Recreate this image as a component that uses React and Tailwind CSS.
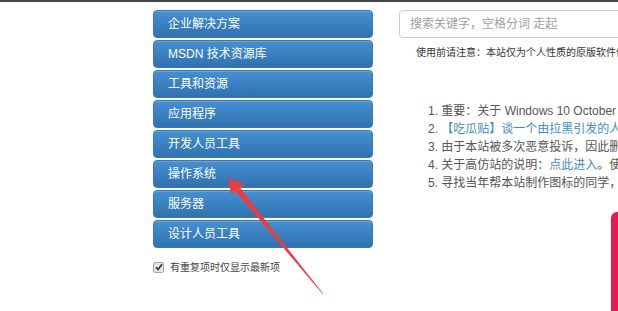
import React from "react";

const items = ["企业解决方案", "MSDN 技术资源库", "工具和资源", "应用程序", "开发人员工具", "操作系统", "服务器", "设计人员工具"];

export default function App() {
  const font = { fontFamily: '"Liberation Sans", "Noto Sans CJK SC", sans-serif' };
  return (
    <div className="relative w-[618px] h-[311px] overflow-hidden bg-white border-t-2 border-[#454545]" style={font}>
      <div className="flex pt-[8px] pl-[153px]">
        <div className="w-[220px] shrink-0 flex flex-col">
          <div className="flex flex-col gap-[2px]">
            {items.map((t) => (
              <div
                key={t}
                className="h-[28px] flex items-center pl-[14px] rounded-[4px] bg-gradient-to-b from-[#4690d2] to-[#2f72b0] border border-[#3579b8] text-white text-[12px] shadow-[inset_0_1px_0_rgba(255,255,255,0.2)]"
              >
                {t}
              </div>
            ))}
          </div>
          <div className="flex items-center mt-[13px] h-[12px]">
            <span className="w-[11px] h-[11px] rounded-[2px] border border-[#a8a8a8] bg-[#e4e4e4] flex items-center justify-center">
              <svg width="8" height="8" viewBox="0 0 8 8"><path d="M1 4.2 L3 6.4 L7 1.2" stroke="#333" strokeWidth="1.7" fill="none" /></svg>
            </span>
            <span className="ml-[6px] text-[10px] text-[#444]">有重复项时仅显示最新项</span>
          </div>
        </div>
        <div className="ml-[26px] flex-1 min-w-0 overflow-hidden">
          <div className="h-[28px] w-[260px] border border-[#cccccc] rounded-[4px] flex items-center pl-[10px] text-[12px] text-[#a0a0a0] whitespace-nowrap">
            搜索关键字，空格分词 走起
          </div>
          <div className="mt-[9px] pl-[17px] text-[10px] leading-[12px] text-[#333] whitespace-nowrap">
            使用前请注意：本站仅为个人性质的原版软件信息收集站点
          </div>
          <ol className="mt-[43px] pl-[29px] text-[12px] leading-[18px] text-[#555] whitespace-nowrap">
            <li>1. 重要：关于 Windows 10 October 2018 Update</li>
            <li>2. <span className="text-[#428bca]">【吃瓜贴】谈一个由拉黑引发的人肉事件</span></li>
            <li>3. 由于本站被多次恶意投诉，因此删除了部分内容</li>
            <li>4. 关于高仿站的说明：<span className="text-[#428bca]">点此进入</span>。使用</li>
            <li>5. 寻找当年帮本站制作图标的同学，非常感谢</li>
          </ol>
        </div>
      </div>
      <div className="absolute right-0 top-[210px] w-[7px] h-[101px] bg-[#e8194f] rounded-tl-[6px]" />
      <svg className="absolute left-0 top-0" width="618" height="311" viewBox="0 0 618 311">
        <polygon points="323.6,292.3 322.4,291.7 235.5,189.5 240,185.8" fill="#ef3b3b" />
        <polygon points="228,176 245,182.5 238,187.5 231,192" fill="#ef3b3b" />
      </svg>
    </div>
  );
}
